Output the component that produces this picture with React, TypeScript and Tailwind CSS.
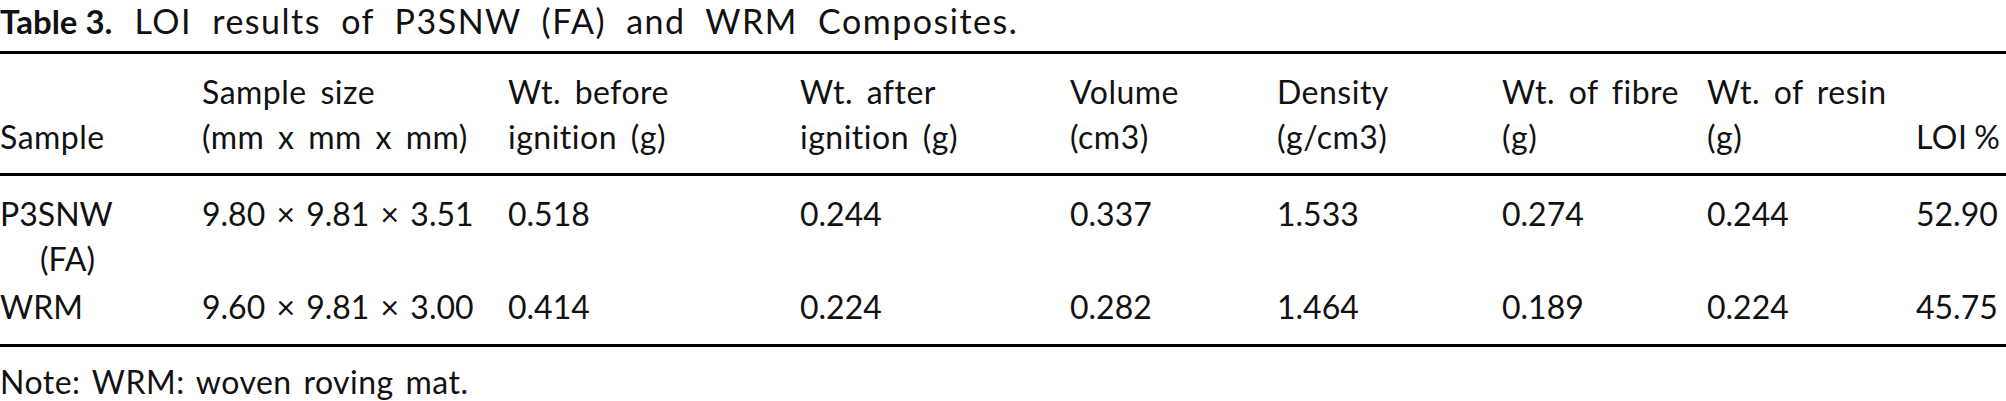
import React from "react";

const cols =
  "grid grid-cols-[202px_306px_292px_270px_207px_225px_205px_209px_1fr]";

const headers: string[][] = [
  ["Sample"],
  ["Sample size", "(mm x mm x mm)"],
  ["Wt. before", "ignition (g)"],
  ["Wt. after", "ignition (g)"],
  ["Volume", "(cm3)"],
  ["Density", "(g/cm3)"],
  ["Wt. of fibre", "(g)"],
  ["Wt. of resin", "(g)"],
  ["LOI %"],
];

const rows = [
  ["P3SNW", "9.80 × 9.81 × 3.51", "0.518", "0.244", "0.337", "1.533", "0.274", "0.244", "52.90"],
  ["WRM", "9.60 × 9.81 × 3.00", "0.414", "0.224", "0.282", "1.464", "0.189", "0.224", "45.75"],
];

export default function App() {
  return (
    <div className="w-[2006px] h-[401px] bg-white text-[#111] font-['Lato',sans-serif] overflow-hidden">
      {/* caption */}
      <div className="flex items-baseline leading-[41px] whitespace-nowrap">
        <span className="font-bold text-[33px]">Table 3.</span>
        <span className="ml-[22px] text-[34px] tracking-[1.5px] [word-spacing:10px]">
          LOI results of P3SNW (FA) and WRM Composites.
        </span>
      </div>

      <div className="mt-[9px] border-t-[3px] border-black" />

      {/* header */}
      <div
        className={`${cols} text-[32px] leading-[45px] tracking-[0.5px] [word-spacing:5px] pt-[15px] pb-[14px] whitespace-nowrap`}
      >
        {headers.map((h, i) => (
          <div
            key={i}
            className={`flex flex-col justify-end ${i === 8 ? "[word-spacing:-2px]" : ""}`}
          >
            {h.map((line, j) => (
              <span key={j}>{line}</span>
            ))}
          </div>
        ))}
      </div>

      <div className="border-t-[3px] border-black" />

      {/* body */}
      <div className="text-[32px] leading-[45px] [word-spacing:3px] pt-[15px] pb-[15px] whitespace-nowrap flex flex-col gap-[3px]">
        {rows.map((r, i) => (
          <div key={i} className={cols}>
            {r.map((c, j) => (
              <div key={j}>
                {c}
                {i === 0 && j === 0 && <div className="pl-[40px]">(FA)</div>}
              </div>
            ))}
          </div>
        ))}
      </div>

      <div className="border-t-[3px] border-black" />

      <div className="mt-[12px] text-[32px] leading-[45px] tracking-[0.5px] [word-spacing:3px] whitespace-nowrap">
        Note: WRM: woven roving mat.
      </div>
    </div>
  );
}
